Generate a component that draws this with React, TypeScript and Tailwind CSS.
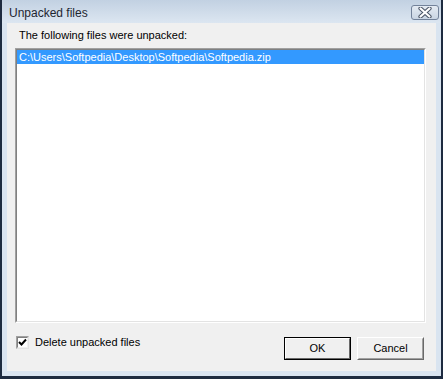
const font = { fontFamily: '"Liberation Sans", Arial, sans-serif' };

const CloseIcon = () => (
  <svg width="16" height="11" viewBox="0 0 16 11">
    <path d="M3.5 1.5 L12.5 9.5 M12.5 1.5 L3.5 9.5" stroke="#4a5566" strokeWidth="4.2" strokeLinecap="round" />
    <path d="M3.5 1.5 L12.5 9.5 M12.5 1.5 L3.5 9.5" stroke="#ffffff" strokeWidth="2.2" strokeLinecap="round" />
  </svg>
);

const Check = () => (
  <svg width="9" height="9" viewBox="0 0 9 9">
    <path d="M1 4 L3.5 6.5 L8 1.5" fill="none" stroke="#000" strokeWidth="2" />
  </svg>
);

const files = ["C:\\Users\\Softpedia\\Desktop\\Softpedia\\Softpedia.zip"];

export default function App() {
  return (
    <div className="w-[443px] h-[379px] bg-[#1d2b40] pl-[2px] pr-[2px] pb-[3px] flex" style={font}>
      <div className="flex-1 flex flex-col bg-[#d9e4f0]">
        {/* title bar */}
        <div className="h-[23px] flex items-start justify-between pl-[7px] pr-[2px] bg-gradient-to-b from-[#c2d1e2] to-[#dce6f1]">
          <span className="text-[12px] leading-[14px] mt-[6px] text-[#1e2530]">Unpacked files</span>
          <div className="mt-[5px] w-[28px] h-[15px] rounded-[3px] border border-[#72829a] bg-gradient-to-b from-[#e4ebf3] to-[#c9d5e3] flex items-center justify-center">
            <CloseIcon />
          </div>
        </div>
        {/* client */}
        <div className="flex-1 mx-[5px] mb-[5px] bg-[#f0f0f0] flex flex-col text-[11px] text-black">
          <p className="ml-[12px] mt-[6px] leading-[13px]">The following files were unpacked:</p>
          <div className="ml-[8px] mr-[10px] mt-[6px] h-[275px] border border-t-[#a0a0a0] border-l-[#a0a0a0] border-r-[#ffffff] border-b-[#ffffff]">
            <div className="h-full border border-t-[#808080] border-l-[#808080] border-r-[#e3e3e3] border-b-[#e3e3e3] bg-white">
              {files.map((f) => (
                <div key={f} className="h-[14px] bg-[#3399ff] text-white leading-[14px] pl-[2px]">
                  {f}
                </div>
              ))}
            </div>
          </div>
          <div className="flex items-start justify-between ml-[9px] mr-[12px] mt-[13px]">
            <label className="flex items-center gap-[6px]">
              <span className="w-[13px] h-[13px] border border-t-[#a0a0a0] border-l-[#a0a0a0] border-r-[#e3e3e3] border-b-[#e3e3e3] bg-white">
                <span className="w-full h-full flex items-center justify-center border border-t-[#808080] border-l-[#808080] border-r-[#f0f0f0] border-b-[#f0f0f0]">
                  <Check />
                </span>
              </span>
              <span className="leading-[13px]">Delete unpacked files</span>
            </label>
            <div className="flex gap-[6px] mt-[1px]">
              <button className="w-[67px] h-[23px] border border-black bg-[#f0f0f0]">
                <span className="block h-full border border-t-white border-l-white border-r-[#696969] border-b-[#696969] leading-[19px] text-[11px]">
                  OK
                </span>
              </button>
              <button className="w-[67px] h-[23px] border border-t-white border-l-white border-r-[#696969] border-b-[#696969] bg-[#f0f0f0]">
                <span className="block h-full border border-t-[#f0f0f0] border-l-[#f0f0f0] border-r-[#a0a0a0] border-b-[#a0a0a0] leading-[19px] text-[11px]">
                  Cancel
                </span>
              </button>
            </div>
          </div>
        </div>
      </div>
    </div>
  );
}
